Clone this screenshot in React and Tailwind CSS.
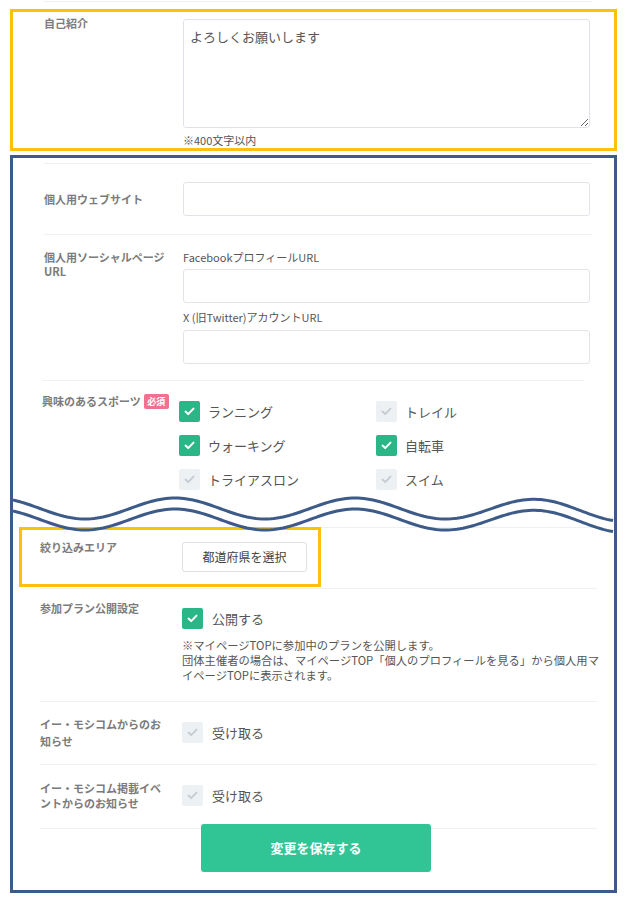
import React from "react";

const LABEL = "text-[11px] font-bold text-[#7b7b7b]";

function Check({ on }) {
  return (
    <span
      className={
        on
          ? "flex h-[21px] w-[21px] shrink-0 items-center justify-center rounded-[2px] bg-[#2bb688]"
          : "flex h-[21px] w-[21px] shrink-0 items-center justify-center rounded-[2px] bg-[#eef1f4]"
      }
    >
      <svg width="11" height="9" viewBox="0 0 11 9">
        <path
          d="M1.5 4.6 L4.2 7.1 L9.5 1.6"
          fill="none"
          stroke={on ? "#ffffff" : "#c6ccd4"}
          strokeWidth="2"
          strokeLinecap="round"
          strokeLinejoin="round"
        />
      </svg>
    </span>
  );
}

function CheckItem({ on, label }) {
  return (
    <div className="flex items-center gap-[8px]">
      <Check on={on} />
      <span className="text-[13px] leading-[21px] text-[#555]">{label}</span>
    </div>
  );
}

function Wave() {
  const w = 602;
  const up = [];
  const lo = [];
  for (let x = 0; x <= w; x += 3) {
    const xa = x + 13;
    const y = 18.5 - 10.5 * Math.cos((2 * Math.PI * (xa - 175)) / 180) + (xa > 450 ? (xa - 450) * 0.015 : 0);
    up.push(`${x},${y.toFixed(2)}`);
    lo.push(`${x},${(y + 11).toFixed(2)}`);
  }
  return (
    <svg
      className="pointer-events-none absolute left-0 top-[332px]"
      width={w}
      height="48"
      viewBox={`0 0 ${w} 48`}
    >
      <polyline points={up.join(" ")} fill="none" stroke="#3d5b88" strokeWidth="3" />
      <polyline points={lo.join(" ")} fill="none" stroke="#3d5b88" strokeWidth="3" />
    </svg>
  );
}

export default function App() {
  return (
    <div className="relative h-[900px] w-[626px] overflow-hidden bg-white font-['Noto_Sans_CJK_JP','Noto_Sans',sans-serif]">
      <div className="ml-[44px] mt-[1px] h-px w-[548px] bg-[#eef0f4]" />

      {/* 自己紹介 highlighted */}
      <div className="ml-[10px] mt-[7px] h-[142px] w-[607px] border-[3px] border-[#fec10b]">
        <div className="flex pl-[31px] pt-[3px]">
          <div className={`w-[139px] leading-[16px] ${LABEL}`}>自己紹介</div>
          <div className="w-[407px]">
            <textarea
              className="mt-[4px] block h-[109px] w-full resize-y rounded-[3px] border border-[#dfe3e9] px-[6px] pt-[8px] text-[13px] leading-[18px] text-[#555] outline-none"
              defaultValue="よろしくお願いします"
            />
            <div className="mt-[6px] text-[11px] leading-[13px] text-[#555]">※400文字以内</div>
          </div>
        </div>
      </div>

      {/* main blue frame */}
      <div className="relative ml-[10px] mt-[4px] h-[738px] w-[607px] border-[3px] border-[#3d5b88]">
        <div className="ml-[31px] mt-[5px] h-px w-[548px] bg-[#eef0f4]" />

        {/* website */}
        <div className="flex items-center py-[18px] pl-[31px]">
          <div className={`w-[139px] leading-[14px] ${LABEL}`}>個人用ウェブサイト</div>
          <div className="h-[34px] w-[407px] rounded-[3px] border border-[#e1e5ea]" />
        </div>
        <div className="ml-[31px] h-px w-[548px] bg-[#eef0f4]" />

        {/* social */}
        <div className="flex items-start pb-[16px] pl-[31px] pt-[14px]">
          <div className={`w-[139px] pt-[1px] leading-[14px] ${LABEL}`}>
            個人用ソーシャルページ
            <br />
            URL
          </div>
          <div className="w-[407px]">
            <div className="text-[11px] leading-[16px] text-[#555]">FacebookプロフィールURL</div>
            <div className="mt-[4px] h-[34px] w-full rounded-[3px] border border-[#e1e5ea]" />
            <div className="mt-[6px] text-[11px] leading-[16px] text-[#555]">X (旧Twitter)アカウントURL</div>
            <div className="mt-[5px] h-[34px] w-full rounded-[3px] border border-[#e1e5ea]" />
          </div>
        </div>
        <div className="ml-[29px] h-px w-[542px] bg-[#eef0f4]" />

        {/* sports */}
        <div className="flex items-start pb-[37px] pl-[29px]">
          <div className="flex w-[137px] items-center gap-[3px] pt-[12px]">
            <span className={`leading-[16px] ${LABEL}`}>興味のあるスポーツ</span>
            <span className="flex h-[15px] w-[25px] items-center justify-center rounded-[2px] bg-[#f07291] text-[9px] font-bold leading-none text-white">
              必須
            </span>
          </div>
          <div className="grid grid-cols-[197px_197px] gap-y-[13px] pt-[20px]">
            <CheckItem on label="ランニング" />
            <CheckItem on={false} label="トレイル" />
            <CheckItem on label="ウォーキング" />
            <CheckItem on label="自転車" />
            <CheckItem on={false} label="トライアスロン" />
            <CheckItem on={false} label="スイム" />
          </div>
        </div>

        <div className="ml-[27px] h-px w-[557px] bg-[#eef0f4]" />

        {/* area highlighted */}
        <div className="-mt-px ml-[6px] flex h-[60px] w-[302px] items-start border-[3px] border-[#fec10b] pl-[18px]">
          <div className={`w-[142px] pt-[10px] leading-[14px] ${LABEL}`}>絞り込みエリア</div>
          <div className="mt-[12px] flex h-[30px] w-[125px] items-center justify-center rounded-[3px] border border-[#dde1e6] bg-white text-[12px] text-[#444]">
            都道府県を選択
          </div>
        </div>

        <div className="ml-[27px] mt-px h-px w-[557px] bg-[#eef0f4]" />

        {/* plan public */}
        <div className="flex items-start pb-[18px] pl-[27px]">
          <div className={`w-[142px] pt-[12px] leading-[14px] ${LABEL}`}>参加プラン公開設定</div>
          <div className="pt-[19px]">
            <div className="flex items-center gap-[9px]">
              <Check on />
              <span className="text-[13px] leading-[21px] text-[#555]">公開する</span>
            </div>
            <div className="mt-[9px] whitespace-nowrap text-[11.3px] leading-[15px] text-[#555]">
              ※マイページTOPに参加中のプランを公開します。
              <br />
              団体主催者の場合は、マイページTOP「個人のプロフィールを見る」から個人用マ
              <br />
              イページTOPに表示されます。
            </div>
          </div>
        </div>

        <div className="ml-[27px] h-px w-[557px] bg-[#eef0f4]" />

        {/* notice 1 */}
        <div className="flex h-[62px] items-start pl-[27px]">
          <div className={`w-[142px] pt-[14px] leading-[17px] ${LABEL}`}>
            イー・モシコムからのお
            <br />
            知らせ
          </div>
          <div className="flex items-center gap-[9px] pt-[20px]">
            <Check on={false} />
            <span className="text-[13px] leading-[21px] text-[#555]">受け取る</span>
          </div>
        </div>

        <div className="ml-[27px] h-px w-[557px] bg-[#eef0f4]" />

        {/* notice 2 */}
        <div className="flex h-[63px] items-start pl-[27px]">
          <div className={`w-[142px] pt-[16px] leading-[15px] ${LABEL}`}>
            イー・モシコム掲載イベ
            <br />
            ントからのお知らせ
          </div>
          <div className="flex items-center gap-[9px] pt-[20px]">
            <Check on={false} />
            <span className="text-[13px] leading-[21px] text-[#555]">受け取る</span>
          </div>
        </div>

        <div className="ml-[27px] h-px w-[557px] bg-[#eef0f4]" />

        <div className="relative -mt-[5px] ml-[188px] flex h-[48px] w-[230px] items-center justify-center rounded-[3px] bg-[#31c495] text-[13px] font-bold text-white">
          変更を保存する
        </div>

        <Wave />
      </div>
    </div>
  );
}
